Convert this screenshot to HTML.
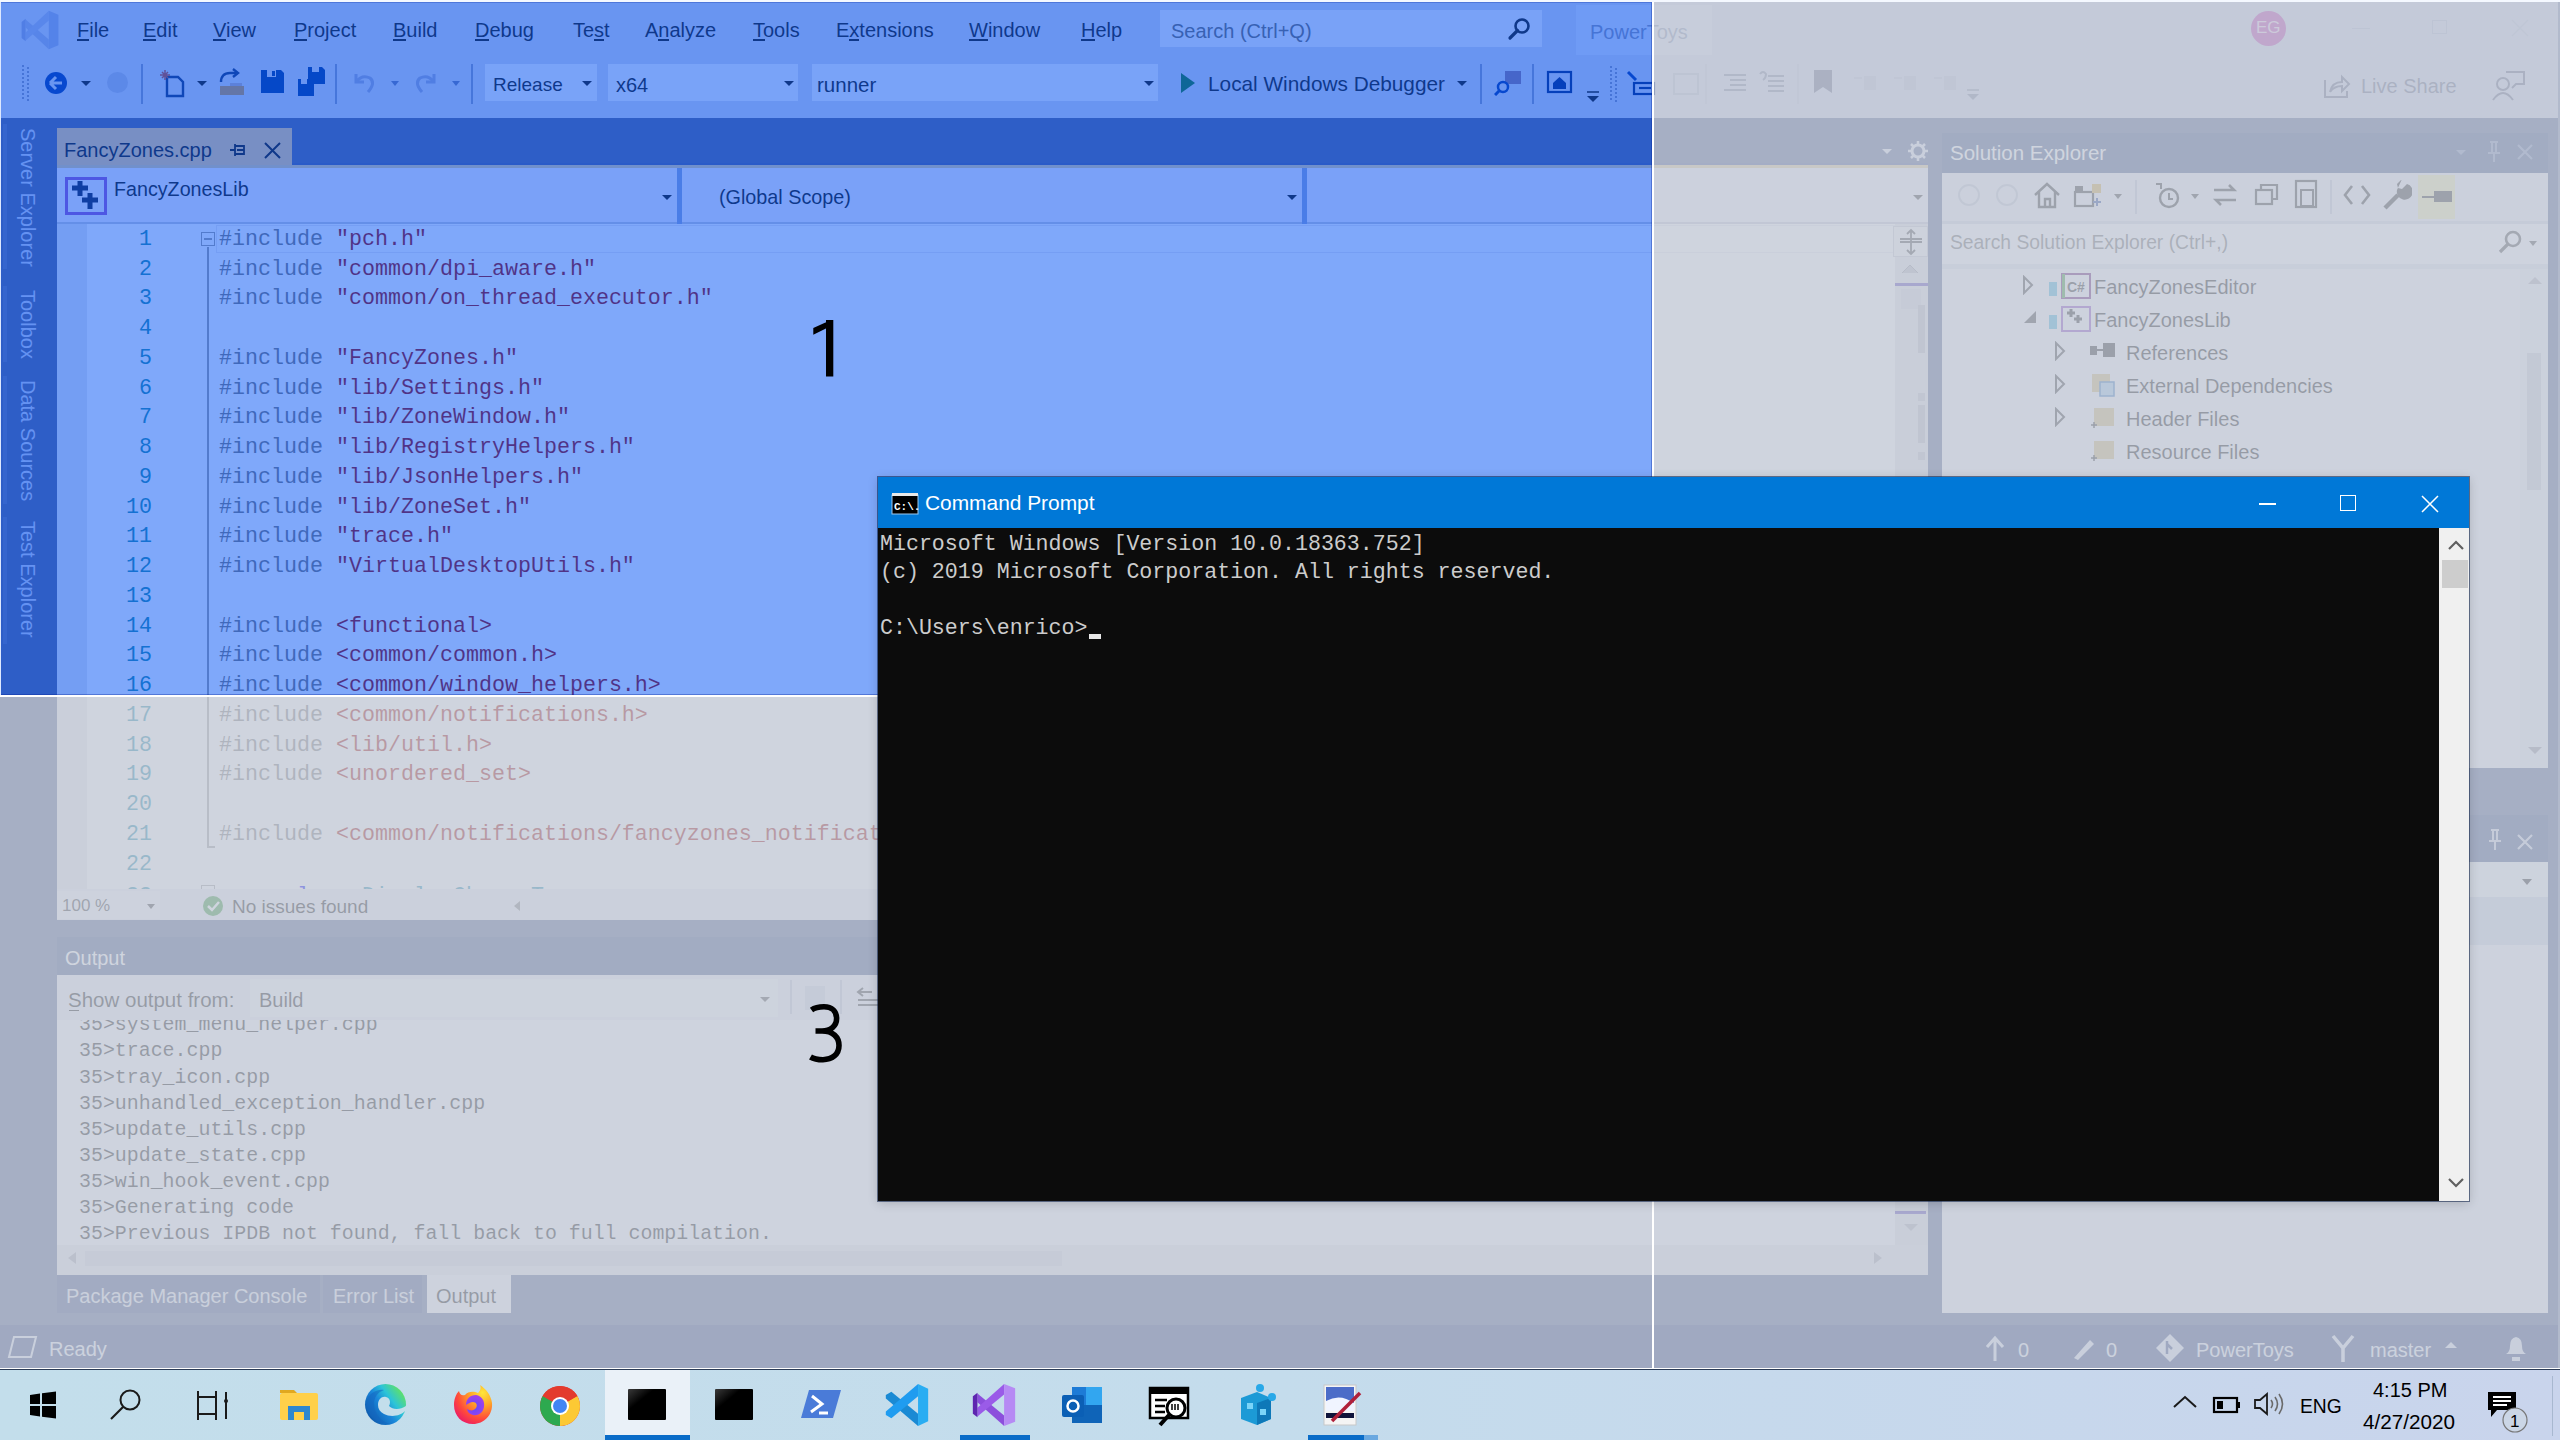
<!DOCTYPE html>
<html><head><meta charset="utf-8">
<style>
html,body{margin:0;padding:0}
body{width:2560px;height:1440px;overflow:hidden;position:relative;font-family:"Liberation Sans",sans-serif;background:#c3dbea}
.a{position:absolute}
.t{white-space:pre;line-height:1}
</style></head><body>

<div id="vs" class="a" style="left:0;top:0;width:2560px;height:1368px;background:#5D6B99;overflow:hidden">
<div class="a" style="left:0px;top:0px;width:2560px;height:118px;background:#D3D8EC;"></div>
<div class="a" style="left:0px;top:0px;width:2560px;height:2px;background:#E8ECF8;"></div>
<svg class="a" style="left:20px;top:10px;" width="40" height="40" viewBox="0 0 40 40"><g transform="scale(0.4,0.4)"><path d="M14 24 L72 74 L72 98 L14 44 Z" fill="#AEB8DC"/><path d="M14 76 L72 26 L72 2 L14 56 Z" fill="#B2BCE0"/><path d="M4 30 L14 22 L14 78 L4 70 Z" fill="#A0AAD4"/><path d="M72 2 L96 12 V88 L72 98 Z" fill="#A8B4DC"/></g></svg>
<div class="a t" style="left:77px;top:20px;font-size:20px;color:#1E1E1E;font-family:'Liberation Sans',sans-serif;">File</div>
<div class="a t" style="left:143px;top:20px;font-size:20px;color:#1E1E1E;font-family:'Liberation Sans',sans-serif;">Edit</div>
<div class="a t" style="left:213px;top:20px;font-size:20px;color:#1E1E1E;font-family:'Liberation Sans',sans-serif;">View</div>
<div class="a t" style="left:294px;top:20px;font-size:20px;color:#1E1E1E;font-family:'Liberation Sans',sans-serif;">Project</div>
<div class="a t" style="left:393px;top:20px;font-size:20px;color:#1E1E1E;font-family:'Liberation Sans',sans-serif;">Build</div>
<div class="a t" style="left:475px;top:20px;font-size:20px;color:#1E1E1E;font-family:'Liberation Sans',sans-serif;">Debug</div>
<div class="a t" style="left:573px;top:20px;font-size:20px;color:#1E1E1E;font-family:'Liberation Sans',sans-serif;">Test</div>
<div class="a t" style="left:645px;top:20px;font-size:20px;color:#1E1E1E;font-family:'Liberation Sans',sans-serif;">Analyze</div>
<div class="a t" style="left:753px;top:20px;font-size:20px;color:#1E1E1E;font-family:'Liberation Sans',sans-serif;">Tools</div>
<div class="a t" style="left:836px;top:20px;font-size:20px;color:#1E1E1E;font-family:'Liberation Sans',sans-serif;">Extensions</div>
<div class="a t" style="left:969px;top:20px;font-size:20px;color:#1E1E1E;font-family:'Liberation Sans',sans-serif;">Window</div>
<div class="a t" style="left:1081px;top:20px;font-size:20px;color:#1E1E1E;font-family:'Liberation Sans',sans-serif;">Help</div>
<div class="a" style="left:77px;top:39px;width:12px;height:1.5px;background:#1E1E1E;"></div>
<div class="a" style="left:143px;top:39px;width:13px;height:1.5px;background:#1E1E1E;"></div>
<div class="a" style="left:213px;top:39px;width:13px;height:1.5px;background:#1E1E1E;"></div>
<div class="a" style="left:294px;top:39px;width:13px;height:1.5px;background:#1E1E1E;"></div>
<div class="a" style="left:393px;top:39px;width:13px;height:1.5px;background:#1E1E1E;"></div>
<div class="a" style="left:475px;top:39px;width:14px;height:1.5px;background:#1E1E1E;"></div>
<div class="a" style="left:594px;top:39px;width:10px;height:1.5px;background:#1E1E1E;"></div>
<div class="a" style="left:658.3px;top:39px;width:11px;height:1.5px;background:#1E1E1E;"></div>
<div class="a" style="left:753px;top:39px;width:12px;height:1.5px;background:#1E1E1E;"></div>
<div class="a" style="left:849.3px;top:39px;width:10px;height:1.5px;background:#1E1E1E;"></div>
<div class="a" style="left:969px;top:39px;width:19px;height:1.5px;background:#1E1E1E;"></div>
<div class="a" style="left:1081px;top:39px;width:14px;height:1.5px;background:#1E1E1E;"></div>
<div class="a" style="left:1160px;top:10px;width:382px;height:37px;background:#F2F3F9;"></div>
<div class="a t" style="left:1171px;top:21px;font-size:20px;color:#717171;font-family:'Liberation Sans',sans-serif;">Search (Ctrl+Q)</div>
<svg class="a" style="left:1506px;top:16px;" width="26" height="26" viewBox="0 0 26 26"><circle cx="16" cy="10" r="6.5" fill="none" stroke="#1E1E1E" stroke-width="2.6"/><path d="M11.5 14.5 L4 22" stroke="#1E1E1E" stroke-width="3.2" stroke-linecap="round"/></svg>
<div class="a" style="left:1576px;top:5px;width:136px;height:50px;background:#DEE4F4;"></div>
<div class="a t" style="left:1590px;top:22px;font-size:20px;color:#8C96B4;font-family:'Liberation Sans',sans-serif;">PowerToys</div>
<div class="a" style="left:2251px;top:11px;width:35px;height:35px;border-radius:50%;background:#C24DB8"></div>
<div class="a t" style="left:2256px;top:19px;font-size:17px;color:#F4D8F0;font-family:'Liberation Sans',sans-serif;">EG</div>
<div class="a" style="left:2352px;top:28px;width:18px;height:1px;background:#B8C0D8;"></div>
<div class="a" style="left:2432px;top:20px;width:15px;height:14px;background:none;border:1.5px solid #B8C0D8;box-sizing:border-box"></div>
<svg class="a" style="left:2510px;top:18px;" width="20" height="20" viewBox="0 0 20 20"><path d="M2 2 L18 18 M18 2 L2 18" stroke="#C0C8DC" stroke-width="1.5"/></svg>
<div class="a" style="left:22px;top:65px;width:2px;height:2px;background:#8D97B8;"></div><div class="a" style="left:27px;top:67px;width:2px;height:2px;background:#8D97B8;"></div><div class="a" style="left:22px;top:69px;width:2px;height:2px;background:#8D97B8;"></div><div class="a" style="left:27px;top:71px;width:2px;height:2px;background:#8D97B8;"></div><div class="a" style="left:22px;top:73px;width:2px;height:2px;background:#8D97B8;"></div><div class="a" style="left:27px;top:75px;width:2px;height:2px;background:#8D97B8;"></div><div class="a" style="left:22px;top:77px;width:2px;height:2px;background:#8D97B8;"></div><div class="a" style="left:27px;top:79px;width:2px;height:2px;background:#8D97B8;"></div><div class="a" style="left:22px;top:81px;width:2px;height:2px;background:#8D97B8;"></div><div class="a" style="left:27px;top:83px;width:2px;height:2px;background:#8D97B8;"></div><div class="a" style="left:22px;top:85px;width:2px;height:2px;background:#8D97B8;"></div><div class="a" style="left:27px;top:87px;width:2px;height:2px;background:#8D97B8;"></div><div class="a" style="left:22px;top:89px;width:2px;height:2px;background:#8D97B8;"></div><div class="a" style="left:27px;top:91px;width:2px;height:2px;background:#8D97B8;"></div><div class="a" style="left:22px;top:93px;width:2px;height:2px;background:#8D97B8;"></div><div class="a" style="left:27px;top:95px;width:2px;height:2px;background:#8D97B8;"></div><div class="a" style="left:22px;top:97px;width:2px;height:2px;background:#8D97B8;"></div><div class="a" style="left:27px;top:99px;width:2px;height:2px;background:#8D97B8;"></div>
<svg class="a" style="left:44px;top:71px;" width="24" height="24" viewBox="0 0 24 24"><circle cx="12" cy="12" r="11" fill="#0E3FA8"/><path d="M6 12 L12 6 M6 12 L12 18 M6 12 H18" stroke="#D3D8EC" stroke-width="3"/></svg>
<div class="a" style="left:81.0px;top:80.5px;width:0;height:0;border-left:5.0px solid transparent;border-right:5.0px solid transparent;border-top:5px solid #1E1E1E"></div>
<div class="a" style="left:107px;top:72px;width:21px;height:21px;border-radius:50%;background:#B8C0DA"></div>
<div class="a" style="left:141px;top:64px;width:2px;height:40px;background:#8D9AC0;"></div>
<svg class="a" style="left:158px;top:68px;" width="28" height="30" viewBox="0 0 28 30"><path d="M9 9 h11 l5 5 v14 h-16 z" fill="none" stroke="#1E3C7A" stroke-width="2.4"/><path d="M4 4 l6 6 M10 4 l-6 6 M7 2 v10 M2 7 h10" stroke="#C0503A" stroke-width="1.5"/></svg>
<div class="a" style="left:197.0px;top:80.5px;width:0;height:0;border-left:5.0px solid transparent;border-right:5.0px solid transparent;border-top:5px solid #1E1E1E"></div>
<svg class="a" style="left:217px;top:66px;" width="30" height="32" viewBox="0 0 30 32"><path d="M4 16 q0 -9 9 -9 h6" fill="none" stroke="#1E3C7A" stroke-width="2.4"/><path d="M16 3 l5 4 l-5 4" fill="none" stroke="#1E3C7A" stroke-width="2.4"/><path d="M3 20 h24 v9 h-24 z" fill="#C89A58"/><path d="M13 17 h12 v3 h-12z" fill="#B8B0C0"/></svg>
<svg class="a" style="left:259px;top:67px;" width="26" height="28" viewBox="0 0 26 28"><path d="M2 3 h20 l3 3 v20 h-23 z" fill="#0B3E9A"/><path d="M8 3 h9 v7 h-9z" fill="#D3D8EC"/><path d="M13 4 h3 v5 h-3z" fill="#0B3E9A"/></svg>
<svg class="a" style="left:296px;top:66px;" width="30" height="32" viewBox="0 0 30 32"><path d="M12 1 h14 l3 3 v14 h-17 z" fill="#0B3E9A"/><path d="M16 1 h7 v5 h-7z" fill="#D3D8EC"/><path d="M2 13 h14 l2 2 v15 h-16 z" fill="#0B3E9A"/><path d="M5 13 h6 v5 h-6z" fill="#D3D8EC"/></svg>
<div class="a" style="left:335px;top:64px;width:2px;height:40px;background:#8D9AC0;"></div>
<svg class="a" style="left:350px;top:68px;" width="28" height="28" viewBox="0 0 28 28"><path d="M6 6 v8 h8" fill="none" stroke="#A0AAD0" stroke-width="3"/><path d="M6 14 q6 -8 14 -4 q6 5 -2 14" fill="none" stroke="#A0AAD0" stroke-width="3"/></svg>
<div class="a" style="left:390.5px;top:80.5px;width:0;height:0;border-left:4.5px solid transparent;border-right:4.5px solid transparent;border-top:5px solid #6F7FB0"></div>
<svg class="a" style="left:412px;top:68px;" width="28" height="28" viewBox="0 0 28 28"><path d="M22 6 v8 h-8" fill="none" stroke="#A0AAD0" stroke-width="3"/><path d="M22 14 q-6 -8 -14 -4 q-6 5 2 14" fill="none" stroke="#A0AAD0" stroke-width="3"/></svg>
<div class="a" style="left:451.5px;top:80.5px;width:0;height:0;border-left:4.5px solid transparent;border-right:4.5px solid transparent;border-top:5px solid #6F7FB0"></div>
<div class="a" style="left:471px;top:64px;width:2px;height:40px;background:#8D9AC0;"></div>
<div class="a" style="left:485px;top:64px;width:112px;height:37px;background:#F3F4FB;"></div>
<div class="a t" style="left:493px;top:75px;font-size:19px;color:#1E1E1E;font-family:'Liberation Sans',sans-serif;">Release</div>
<div class="a" style="left:582.0px;top:80.5px;width:0;height:0;border-left:5.0px solid transparent;border-right:5.0px solid transparent;border-top:5px solid #1E1E1E"></div>
<div class="a" style="left:608px;top:64px;width:190px;height:37px;background:#F3F4FB;"></div>
<div class="a t" style="left:616px;top:75px;font-size:20px;color:#1E1E1E;font-family:'Liberation Sans',sans-serif;">x64</div>
<div class="a" style="left:784.0px;top:80.5px;width:0;height:0;border-left:5.0px solid transparent;border-right:5.0px solid transparent;border-top:5px solid #1E1E1E"></div>
<div class="a" style="left:812px;top:64px;width:346px;height:37px;background:#F3F4FB;"></div>
<div class="a t" style="left:817px;top:75px;font-size:20.5px;color:#1E1E1E;font-family:'Liberation Sans',sans-serif;">runner</div>
<div class="a" style="left:1144.0px;top:80.5px;width:0;height:0;border-left:5.0px solid transparent;border-right:5.0px solid transparent;border-top:5px solid #1E1E1E"></div>
<svg class="a" style="left:1178px;top:71px;" width="20" height="24" viewBox="0 0 20 24"><path d="M3 2 L17 12 L3 22 Z" fill="#1C7A3A"/></svg>
<div class="a t" style="left:1208px;top:74px;font-size:20.8px;color:#1E1E1E;font-family:'Liberation Sans',sans-serif;">Local Windows Debugger</div>
<div class="a" style="left:1457.0px;top:80.5px;width:0;height:0;border-left:5.0px solid transparent;border-right:5.0px solid transparent;border-top:5px solid #1E1E1E"></div>
<div class="a" style="left:1480px;top:64px;width:2px;height:40px;background:#8D9AC0;"></div>
<svg class="a" style="left:1494px;top:68px;" width="30" height="28" viewBox="0 0 30 28"><rect x="11" y="3" width="16" height="13" fill="#8C7A9E"/><circle cx="9" cy="19" r="5" fill="none" stroke="#0E3FA8" stroke-width="2.5"/><path d="M5 23 l-4 4" stroke="#0E3FA8" stroke-width="3"/></svg>
<div class="a" style="left:1532px;top:64px;width:2px;height:40px;background:#8D9AC0;"></div>
<svg class="a" style="left:1546px;top:70px;" width="28" height="24" viewBox="0 0 28 24"><rect x="2" y="2" width="23" height="20" fill="none" stroke="#0B2E80" stroke-width="2.2"/><path d="M7 13 l6.5 -6 l6.5 6 v6 h-13z" fill="#0B2E80"/></svg>
<svg class="a" style="left:1585px;top:90px;" width="16" height="14" viewBox="0 0 16 14"><path d="M2 2 h12" stroke="#1E1E1E" stroke-width="1.5"/><path d="M2 6 h12 l-6 6z" fill="#1E1E1E"/></svg>
<div class="a" style="left:1610px;top:66px;width:2px;height:2px;background:#8D97B8;"></div><div class="a" style="left:1615px;top:68px;width:2px;height:2px;background:#8D97B8;"></div><div class="a" style="left:1610px;top:70px;width:2px;height:2px;background:#8D97B8;"></div><div class="a" style="left:1615px;top:72px;width:2px;height:2px;background:#8D97B8;"></div><div class="a" style="left:1610px;top:74px;width:2px;height:2px;background:#8D97B8;"></div><div class="a" style="left:1615px;top:76px;width:2px;height:2px;background:#8D97B8;"></div><div class="a" style="left:1610px;top:78px;width:2px;height:2px;background:#8D97B8;"></div><div class="a" style="left:1615px;top:80px;width:2px;height:2px;background:#8D97B8;"></div><div class="a" style="left:1610px;top:82px;width:2px;height:2px;background:#8D97B8;"></div><div class="a" style="left:1615px;top:84px;width:2px;height:2px;background:#8D97B8;"></div><div class="a" style="left:1610px;top:86px;width:2px;height:2px;background:#8D97B8;"></div><div class="a" style="left:1615px;top:88px;width:2px;height:2px;background:#8D97B8;"></div><div class="a" style="left:1610px;top:90px;width:2px;height:2px;background:#8D97B8;"></div><div class="a" style="left:1615px;top:92px;width:2px;height:2px;background:#8D97B8;"></div><div class="a" style="left:1610px;top:94px;width:2px;height:2px;background:#8D97B8;"></div><div class="a" style="left:1615px;top:96px;width:2px;height:2px;background:#8D97B8;"></div><div class="a" style="left:1610px;top:98px;width:2px;height:2px;background:#8D97B8;"></div><div class="a" style="left:1615px;top:100px;width:2px;height:2px;background:#8D97B8;"></div>
<svg class="a" style="left:1626px;top:70px;" width="30" height="28" viewBox="0 0 30 28"><path d="M2 2 l8 8" stroke="#0E3FA8" stroke-width="3"/><rect x="8" y="13" width="20" height="11" fill="none" stroke="#0B2E80" stroke-width="2.2"/><path d="M13 18 h12" stroke="#0B2E80" stroke-width="2.2"/></svg>
<svg class="a" style="left:1668px;top:68px;" width="34" height="30" viewBox="0 0 34 30"><rect x="6" y="6" width="24" height="20" fill="none" stroke="#B8BED4" stroke-width="2"/></svg>
<div class="a" style="left:1705px;top:64px;width:2px;height:40px;background:#C5CBE0;"></div>
<svg class="a" style="left:1722px;top:72px;" width="26" height="22" viewBox="0 0 26 22"><path d="M2 3 h22 M8 8 h16 M8 13 h16 M2 18 h22" stroke="#8890A8" stroke-width="2"/></svg>
<svg class="a" style="left:1758px;top:70px;" width="28" height="26" viewBox="0 0 28 26"><path d="M2 4 q3 -4 6 0 q0 4 -3 6" fill="none" stroke="#8890A8" stroke-width="2"/><path d="M10 6 h16 M10 11 h16 M10 16 h16 M10 21 h16" stroke="#8890A8" stroke-width="2"/></svg>
<div class="a" style="left:1797px;top:64px;width:2px;height:40px;background:#C5CBE0;"></div>
<svg class="a" style="left:1810px;top:68px;" width="28" height="28" viewBox="0 0 28 28"><path d="M4 2 h18 v23 l-9 -6 l-9 6z" fill="#6F7690"/></svg>
<svg class="a" style="left:1852px;top:70px;" width="28" height="26" viewBox="0 0 28 26"><rect x="12" y="6" width="12" height="14" fill="#C2C8DC"/><path d="M2 8 h8" stroke="#C2C8DC" stroke-width="2"/></svg>
<svg class="a" style="left:1892px;top:70px;" width="28" height="26" viewBox="0 0 28 26"><rect x="12" y="6" width="12" height="14" fill="#C2C8DC"/><path d="M2 8 h8" stroke="#C2C8DC" stroke-width="2"/></svg>
<svg class="a" style="left:1932px;top:70px;" width="28" height="26" viewBox="0 0 28 26"><rect x="12" y="6" width="12" height="14" fill="#C2C8DC"/><path d="M2 8 h8" stroke="#C2C8DC" stroke-width="2"/></svg>
<svg class="a" style="left:1965px;top:88px;" width="16" height="14" viewBox="0 0 16 14"><path d="M2 2 h12" stroke="#8890A8" stroke-width="1.5"/><path d="M2 6 h12 l-6 6z" fill="#8890A8"/></svg>
<svg class="a" style="left:2322px;top:70px;" width="30" height="30" viewBox="0 0 30 30"><path d="M3 10 v17 h22 v-6" fill="none" stroke="#6F7690" stroke-width="2"/><path d="M8 22 q2 -10 12 -10 v-5 l7 7 l-7 7 v-5 q-8 0 -12 6" fill="none" stroke="#6F7690" stroke-width="2"/></svg>
<div class="a t" style="left:2361px;top:76px;font-size:20px;color:#6F7690;font-family:'Liberation Sans',sans-serif;">Live Share</div>
<svg class="a" style="left:2490px;top:66px;" width="40" height="38" viewBox="0 0 40 38"><circle cx="13" cy="18" r="6" fill="none" stroke="#6F7690" stroke-width="2"/><path d="M3 34 q10 -14 20 0" fill="none" stroke="#6F7690" stroke-width="2"/><path d="M16 6 h18 v12 h-8 l-4 4" fill="none" stroke="#6F7690" stroke-width="2"/></svg>
<div class="a" style="left:57px;top:128px;width:235px;height:38px;background:#F0CC92;"></div>
<div class="a t" style="left:64px;top:140px;font-size:20px;color:#1E1E1E;font-family:'Liberation Sans',sans-serif;">FancyZones.cpp</div>
<svg class="a" style="left:228px;top:141px;" width="20" height="18" viewBox="0 0 20 18"><path d="M2 9 h5 M7 3 v12 M7 5 h9 v8 h-9 M9 9 h7" fill="none" stroke="#1E1E1E" stroke-width="1.8"/></svg>
<svg class="a" style="left:263px;top:141px;" width="19" height="19" viewBox="0 0 19 19"><path d="M2 2 L17 17 M17 2 L2 17" stroke="#1E1E1E" stroke-width="2"/></svg>
<div class="a" style="left:292px;top:163px;width:1636px;height:2px;background:#54659A;"></div>
<div class="a" style="left:57px;top:165px;width:1871px;height:3px;background:#E2CEA0;"></div>
<div class="a" style="left:1882.0px;top:148.5px;width:0;height:0;border-left:5.0px solid transparent;border-right:5.0px solid transparent;border-top:5px solid #E8ECF8"></div>
<svg class="a" style="left:1906px;top:139px;" width="24" height="24" viewBox="0 0 24 24"><circle cx="12" cy="12" r="6" fill="none" stroke="#E8ECF8" stroke-width="3"/><path d="M12 2 v4 M12 18 v4 M2 12 h4 M18 12 h4 M5 5 l3 3 M16 16 l3 3 M5 19 l3 -3 M16 8 l3 -3" stroke="#E8ECF8" stroke-width="2.5"/></svg>
<div class="a t" style="left:38px;top:128px;font-size:20px;color:#C9D2EE;transform-origin:0 0;transform:rotate(90deg)">Server Explorer</div>
<div class="a" style="left:3px;top:124px;width:4px;height:145px;background:#6A78A6;"></div>
<div class="a t" style="left:38px;top:290px;font-size:20px;color:#C9D2EE;transform-origin:0 0;transform:rotate(90deg)">Toolbox</div>
<div class="a" style="left:3px;top:286px;width:4px;height:76px;background:#6A78A6;"></div>
<div class="a t" style="left:38px;top:380px;font-size:20px;color:#C9D2EE;transform-origin:0 0;transform:rotate(90deg)">Data Sources</div>
<div class="a" style="left:3px;top:376px;width:4px;height:128px;background:#6A78A6;"></div>
<div class="a t" style="left:38px;top:521px;font-size:20px;color:#C9D2EE;transform-origin:0 0;transform:rotate(90deg)">Test Explorer</div>
<div class="a" style="left:3px;top:517px;width:4px;height:127px;background:#6A78A6;"></div>
<div class="a" style="left:57px;top:168px;width:1871px;height:56px;background:#F4F1FB;"></div>
<div class="a" style="left:57px;top:222px;width:1871px;height:2px;background:#C9CCDA;"></div>
<div class="a" style="left:677px;top:168px;width:5px;height:56px;background:#94A8D8;"></div>
<div class="a" style="left:1302px;top:168px;width:5px;height:56px;background:#94A8D8;"></div>
<svg class="a" style="left:63px;top:175px;" width="46" height="42" viewBox="0 0 46 42"><rect x="3.5" y="3.5" width="39" height="35" fill="none" stroke="#9A5CD0" stroke-width="3"/><path d="M9 13 h16 M17 6 v15 M19 25 h16 M27 18 v16" stroke="#1E2A50" stroke-width="5"/></svg>
<div class="a t" style="left:114px;top:180px;font-size:19.7px;color:#1E1E1E;font-family:'Liberation Sans',sans-serif;">FancyZonesLib</div>
<div class="a" style="left:662.0px;top:194.5px;width:0;height:0;border-left:5.0px solid transparent;border-right:5.0px solid transparent;border-top:5px solid #1E1E1E"></div>
<div class="a t" style="left:719px;top:188px;font-size:19.8px;color:#1E1E1E;font-family:'Liberation Sans',sans-serif;">(Global Scope)</div>
<div class="a" style="left:1287.0px;top:194.5px;width:0;height:0;border-left:5.0px solid transparent;border-right:5.0px solid transparent;border-top:5px solid #1E1E1E"></div>
<div class="a" style="left:1913.0px;top:194.5px;width:0;height:0;border-left:5.0px solid transparent;border-right:5.0px solid transparent;border-top:5px solid #444"></div>
<div class="a" style="left:57px;top:224px;width:1838px;height:666px;background:#FFFFFF;"></div>
<div class="a" style="left:57px;top:224px;width:30px;height:666px;background:#E9EAF0;"></div>
<div class="a" style="left:57px;top:224px;width:1838px;height:666px;overflow:hidden">
<div class="a t" style="left:82.0px;top:4.7px;font-size:21.66px;color:#2B91AF;font-family:'Liberation Mono',monospace">1</div>
<div class="a t" style="left:162px;top:4.7px;font-size:21.66px;font-family:'Liberation Mono',monospace"><span style="color:#808080">#include</span><span style="color:#A31515"> &quot;pch.h&quot;</span></div>
<div class="a t" style="left:82.0px;top:34.5px;font-size:21.66px;color:#2B91AF;font-family:'Liberation Mono',monospace">2</div>
<div class="a t" style="left:162px;top:34.5px;font-size:21.66px;font-family:'Liberation Mono',monospace"><span style="color:#808080">#include</span><span style="color:#A31515"> &quot;common/dpi_aware.h&quot;</span></div>
<div class="a t" style="left:82.0px;top:64.2px;font-size:21.66px;color:#2B91AF;font-family:'Liberation Mono',monospace">3</div>
<div class="a t" style="left:162px;top:64.2px;font-size:21.66px;font-family:'Liberation Mono',monospace"><span style="color:#808080">#include</span><span style="color:#A31515"> &quot;common/on_thread_executor.h&quot;</span></div>
<div class="a t" style="left:82.0px;top:94.0px;font-size:21.66px;color:#2B91AF;font-family:'Liberation Mono',monospace">4</div>
<div class="a t" style="left:82.0px;top:123.7px;font-size:21.66px;color:#2B91AF;font-family:'Liberation Mono',monospace">5</div>
<div class="a t" style="left:162px;top:123.7px;font-size:21.66px;font-family:'Liberation Mono',monospace"><span style="color:#808080">#include</span><span style="color:#A31515"> &quot;FancyZones.h&quot;</span></div>
<div class="a t" style="left:82.0px;top:153.5px;font-size:21.66px;color:#2B91AF;font-family:'Liberation Mono',monospace">6</div>
<div class="a t" style="left:162px;top:153.5px;font-size:21.66px;font-family:'Liberation Mono',monospace"><span style="color:#808080">#include</span><span style="color:#A31515"> &quot;lib/Settings.h&quot;</span></div>
<div class="a t" style="left:82.0px;top:183.3px;font-size:21.66px;color:#2B91AF;font-family:'Liberation Mono',monospace">7</div>
<div class="a t" style="left:162px;top:183.3px;font-size:21.66px;font-family:'Liberation Mono',monospace"><span style="color:#808080">#include</span><span style="color:#A31515"> &quot;lib/ZoneWindow.h&quot;</span></div>
<div class="a t" style="left:82.0px;top:213.0px;font-size:21.66px;color:#2B91AF;font-family:'Liberation Mono',monospace">8</div>
<div class="a t" style="left:162px;top:213.0px;font-size:21.66px;font-family:'Liberation Mono',monospace"><span style="color:#808080">#include</span><span style="color:#A31515"> &quot;lib/RegistryHelpers.h&quot;</span></div>
<div class="a t" style="left:82.0px;top:242.8px;font-size:21.66px;color:#2B91AF;font-family:'Liberation Mono',monospace">9</div>
<div class="a t" style="left:162px;top:242.8px;font-size:21.66px;font-family:'Liberation Mono',monospace"><span style="color:#808080">#include</span><span style="color:#A31515"> &quot;lib/JsonHelpers.h&quot;</span></div>
<div class="a t" style="left:69.0px;top:272.5px;font-size:21.66px;color:#2B91AF;font-family:'Liberation Mono',monospace">10</div>
<div class="a t" style="left:162px;top:272.5px;font-size:21.66px;font-family:'Liberation Mono',monospace"><span style="color:#808080">#include</span><span style="color:#A31515"> &quot;lib/ZoneSet.h&quot;</span></div>
<div class="a t" style="left:69.0px;top:302.3px;font-size:21.66px;color:#2B91AF;font-family:'Liberation Mono',monospace">11</div>
<div class="a t" style="left:162px;top:302.3px;font-size:21.66px;font-family:'Liberation Mono',monospace"><span style="color:#808080">#include</span><span style="color:#A31515"> &quot;trace.h&quot;</span></div>
<div class="a t" style="left:69.0px;top:332.1px;font-size:21.66px;color:#2B91AF;font-family:'Liberation Mono',monospace">12</div>
<div class="a t" style="left:162px;top:332.1px;font-size:21.66px;font-family:'Liberation Mono',monospace"><span style="color:#808080">#include</span><span style="color:#A31515"> &quot;VirtualDesktopUtils.h&quot;</span></div>
<div class="a t" style="left:69.0px;top:361.8px;font-size:21.66px;color:#2B91AF;font-family:'Liberation Mono',monospace">13</div>
<div class="a t" style="left:69.0px;top:391.6px;font-size:21.66px;color:#2B91AF;font-family:'Liberation Mono',monospace">14</div>
<div class="a t" style="left:162px;top:391.6px;font-size:21.66px;font-family:'Liberation Mono',monospace"><span style="color:#808080">#include</span><span style="color:#A31515"> &lt;functional&gt;</span></div>
<div class="a t" style="left:69.0px;top:421.3px;font-size:21.66px;color:#2B91AF;font-family:'Liberation Mono',monospace">15</div>
<div class="a t" style="left:162px;top:421.3px;font-size:21.66px;font-family:'Liberation Mono',monospace"><span style="color:#808080">#include</span><span style="color:#A31515"> &lt;common/common.h&gt;</span></div>
<div class="a t" style="left:69.0px;top:451.1px;font-size:21.66px;color:#2B91AF;font-family:'Liberation Mono',monospace">16</div>
<div class="a t" style="left:162px;top:451.1px;font-size:21.66px;font-family:'Liberation Mono',monospace"><span style="color:#808080">#include</span><span style="color:#A31515"> &lt;common/window_helpers.h&gt;</span></div>
<div class="a t" style="left:69.0px;top:480.9px;font-size:21.66px;color:#2B91AF;font-family:'Liberation Mono',monospace">17</div>
<div class="a t" style="left:162px;top:480.9px;font-size:21.66px;font-family:'Liberation Mono',monospace"><span style="color:#808080">#include</span><span style="color:#A31515"> &lt;common/notifications.h&gt;</span></div>
<div class="a t" style="left:69.0px;top:510.6px;font-size:21.66px;color:#2B91AF;font-family:'Liberation Mono',monospace">18</div>
<div class="a t" style="left:162px;top:510.6px;font-size:21.66px;font-family:'Liberation Mono',monospace"><span style="color:#808080">#include</span><span style="color:#A31515"> &lt;lib/util.h&gt;</span></div>
<div class="a t" style="left:69.0px;top:540.4px;font-size:21.66px;color:#2B91AF;font-family:'Liberation Mono',monospace">19</div>
<div class="a t" style="left:162px;top:540.4px;font-size:21.66px;font-family:'Liberation Mono',monospace"><span style="color:#808080">#include</span><span style="color:#A31515"> &lt;unordered_set&gt;</span></div>
<div class="a t" style="left:69.0px;top:570.1px;font-size:21.66px;color:#2B91AF;font-family:'Liberation Mono',monospace">20</div>
<div class="a t" style="left:69.0px;top:599.9px;font-size:21.66px;color:#2B91AF;font-family:'Liberation Mono',monospace">21</div>
<div class="a t" style="left:162px;top:599.9px;font-size:21.66px;font-family:'Liberation Mono',monospace"><span style="color:#808080">#include</span><span style="color:#A31515"> &lt;common/notifications/fancyzones_notifications.h&gt;</span></div>
<div class="a t" style="left:69.0px;top:629.7px;font-size:21.66px;color:#2B91AF;font-family:'Liberation Mono',monospace">22</div>
<div class="a t" style="left:69.0px;top:662.4px;font-size:21.66px;color:#2B91AF;font-family:'Liberation Mono',monospace">23</div>
<div class="a t" style="left:162px;top:662.4px;font-size:21.66px;font-family:'Liberation Mono',monospace"><span style="color:#0000FF">enum class</span> <span style="color:#2B91AF">DisplayChangeType</span></div>
</div>
<div class="a" style="left:201px;top:232px;width:14px;height:14px;background:none;border:1px solid #A5A5A5;box-sizing:border-box"></div>
<div class="a" style="left:204px;top:238px;width:8px;height:1.5px;background:#A5A5A5;"></div>
<div class="a" style="left:207px;top:247px;width:1.5px;height:600px;background:#A5A5A5;"></div>
<div class="a" style="left:207px;top:846px;width:8px;height:1.5px;background:#A5A5A5;"></div>
<div class="a" style="left:201px;top:885px;width:14px;height:14px;background:none;border:1px solid #A5A5A5;box-sizing:border-box"></div>
<div class="a" style="left:216px;top:225px;width:1679px;height:28px;background:none;border:1px solid #EAEAF2;box-sizing:border-box"></div>
<div class="a" style="left:1895px;top:224px;width:33px;height:666px;background:#E8E8EC;"></div>
<div class="a" style="left:1893px;top:226px;width:35px;height:31px;background:#F5F5F5;border:1px solid #D0D0D8;box-sizing:border-box"></div>
<svg class="a" style="left:1898px;top:228px;" width="26" height="28" viewBox="0 0 26 28"><path d="M2 14 h22 M2 11 h22 M13 2 v24 M9 6 l4 -4 l4 4 M9 22 l4 4 l4 -4" fill="none" stroke="#555" stroke-width="1.8"/></svg>
<svg class="a" style="left:1900px;top:262px;" width="20" height="14" viewBox="0 0 20 14"><path d="M2 11 L10 3 L18 11" fill="#C0C0C8" stroke="#A0A0A8" stroke-width="1"/></svg>
<div class="a" style="left:1895px;top:283px;width:33px;height:3px;background:#6650C0;"></div>
<div class="a" style="left:1901px;top:289px;width:20px;height:20px;background:#DADAE2;"></div>
<div class="a" style="left:1918px;top:305px;width:7px;height:48px;background:#C2C3CC;"></div>
<div class="a" style="left:1918px;top:393px;width:7px;height:8px;background:#C8C8D0;"></div>
<div class="a" style="left:1918px;top:405px;width:7px;height:38px;background:#C2C3CC;"></div>
<div class="a" style="left:1918px;top:452px;width:7px;height:8px;background:#C8C8D0;"></div>
<div class="a" style="left:57px;top:889px;width:1871px;height:31px;background:#F0F0F5;"></div>
<div class="a" style="left:57px;top:891px;width:103px;height:28px;background:#F8F8FC;"></div>
<div class="a t" style="left:62px;top:897px;font-size:17px;color:#444;font-family:'Liberation Sans',sans-serif;">100 %</div>
<div class="a" style="left:146.5px;top:903.5px;width:0;height:0;border-left:4.5px solid transparent;border-right:4.5px solid transparent;border-top:5px solid #444"></div>
<div class="a" style="left:203px;top:896px;width:20px;height:20px;border-radius:50%;background:#3C9A40"></div>
<svg class="a" style="left:203px;top:896px;" width="20" height="20" viewBox="0 0 20 20"><path d="M5 10 l4 4 l7 -8" fill="none" stroke="#fff" stroke-width="2.5"/></svg>
<div class="a t" style="left:232px;top:897px;font-size:19px;color:#1E1E1E;font-family:'Liberation Sans',sans-serif;">No issues found</div>
<svg class="a" style="left:512px;top:899px;" width="10" height="14" viewBox="0 0 10 14"><path d="M8 2 L2 7 L8 12" fill="#888"/></svg>
<div class="a" style="left:57px;top:937px;width:1871px;height:38px;background:#4B618F;"></div>
<div class="a t" style="left:65px;top:948px;font-size:20px;color:#FFFFFF;font-family:'Liberation Sans',sans-serif;">Output</div>
<div class="a" style="left:57px;top:975px;width:1871px;height:45px;background:#EEF0F7;"></div>
<div class="a t" style="left:68px;top:990px;font-size:20.5px;color:#1E1E1E;font-family:'Liberation Sans',sans-serif;">Show output from:</div>
<div class="a" style="left:69px;top:1010px;width:10px;height:1px;background:#1E1E1E;"></div>
<div class="a" style="left:250px;top:979px;width:528px;height:38px;background:#F8F9FC;"></div>
<div class="a t" style="left:259px;top:990px;font-size:20px;color:#1E1E1E;font-family:'Liberation Sans',sans-serif;">Build</div>
<div class="a" style="left:760.0px;top:996.5px;width:0;height:0;border-left:5.0px solid transparent;border-right:5.0px solid transparent;border-top:5px solid #555"></div>
<div class="a" style="left:790px;top:980px;width:1.5px;height:34px;background:#C8CCDA;"></div>
<div class="a" style="left:805px;top:986px;width:20px;height:24px;background:#D8DCE8;"></div>
<div class="a" style="left:840px;top:980px;width:1.5px;height:34px;background:#C8CCDA;"></div>
<svg class="a" style="left:855px;top:984px;" width="28" height="28" viewBox="0 0 28 28"><path d="M8 4 l-5 4 l5 4 M3 8 h14 M3 16 h22 M3 21 h22" fill="none" stroke="#444" stroke-width="2"/></svg>
<div class="a" style="left:57px;top:1020px;width:1871px;height:225px;background:#FAFBFF;"></div>
<div class="a" style="left:57px;top:1020px;width:1871px;height:225px;overflow:hidden">
<div class="a t" style="left:22px;top:-4.7px;font-size:19.92px;color:#1E1E1E;font-family:'Liberation Mono',monospace">35&gt;system_menu_helper.cpp</div>
<div class="a t" style="left:22px;top:21.4px;font-size:19.92px;color:#1E1E1E;font-family:'Liberation Mono',monospace">35&gt;trace.cpp</div>
<div class="a t" style="left:22px;top:47.5px;font-size:19.92px;color:#1E1E1E;font-family:'Liberation Mono',monospace">35&gt;tray_icon.cpp</div>
<div class="a t" style="left:22px;top:73.6px;font-size:19.92px;color:#1E1E1E;font-family:'Liberation Mono',monospace">35&gt;unhandled_exception_handler.cpp</div>
<div class="a t" style="left:22px;top:99.7px;font-size:19.92px;color:#1E1E1E;font-family:'Liberation Mono',monospace">35&gt;update_utils.cpp</div>
<div class="a t" style="left:22px;top:125.8px;font-size:19.92px;color:#1E1E1E;font-family:'Liberation Mono',monospace">35&gt;update_state.cpp</div>
<div class="a t" style="left:22px;top:151.9px;font-size:19.92px;color:#1E1E1E;font-family:'Liberation Mono',monospace">35&gt;win_hook_event.cpp</div>
<div class="a t" style="left:22px;top:178.0px;font-size:19.92px;color:#1E1E1E;font-family:'Liberation Mono',monospace">35&gt;Generating code</div>
<div class="a t" style="left:22px;top:204.1px;font-size:19.92px;color:#1E1E1E;font-family:'Liberation Mono',monospace">35&gt;Previous IPDB not found, fall back to full compilation.</div>
</div>
<div class="a" style="left:1895px;top:1020px;width:33px;height:225px;background:#E8E8EC;"></div>
<div class="a" style="left:1895px;top:1211px;width:31px;height:3px;background:#6650C0;"></div>
<svg class="a" style="left:1902px;top:1222px;" width="18" height="12" viewBox="0 0 18 12"><path d="M2 2 L9 9 L16 2" fill="#B8B8C0"/></svg>
<div class="a" style="left:57px;top:1245px;width:1871px;height:30px;background:#ECECF0;"></div>
<svg class="a" style="left:66px;top:1250px;" width="12" height="16" viewBox="0 0 12 16"><path d="M10 2 L2 8 L10 14 z" fill="#B0B0B8"/></svg>
<div class="a" style="left:85px;top:1251px;width:977px;height:15px;background:#DADCE4;"></div>
<svg class="a" style="left:1872px;top:1250px;" width="12" height="16" viewBox="0 0 12 16"><path d="M2 2 L10 8 L2 14 z" fill="#B0B0B8"/></svg>
<div class="a" style="left:57px;top:1275px;width:263px;height:38px;background:#4E5E8E;"></div>
<div class="a t" style="left:66px;top:1286px;font-size:20px;color:#E6EAF4;font-family:'Liberation Sans',sans-serif;">Package Manager Console</div>
<div class="a" style="left:323px;top:1275px;width:99px;height:38px;background:#4E5E8E;"></div>
<div class="a t" style="left:333px;top:1286px;font-size:20px;color:#E6EAF4;font-family:'Liberation Sans',sans-serif;">Error List</div>
<div class="a" style="left:427px;top:1275px;width:84px;height:38px;background:#F6F7FB;"></div>
<div class="a t" style="left:436px;top:1286px;font-size:20px;color:#1E1E1E;font-family:'Liberation Sans',sans-serif;">Output</div>
<div class="a" style="left:1942px;top:133px;width:606px;height:1180px;background:#F6F7FB;"></div>
<div class="a" style="left:1942px;top:133px;width:606px;height:40px;background:#4B618F;"></div>
<div class="a t" style="left:1950px;top:143px;font-size:20.5px;color:#FFFFFF;font-family:'Liberation Sans',sans-serif;">Solution Explorer</div>
<div class="a" style="left:2456.0px;top:149.5px;width:0;height:0;border-left:5.0px solid transparent;border-right:5.0px solid transparent;border-top:5px solid #8898C0"></div>
<svg class="a" style="left:2484px;top:140px;" width="20" height="24" viewBox="0 0 20 24"><path d="M6 2 h8 M8 2 v11 M12 2 v11 M4 13 h12 M10 13 v9" stroke="#8898C0" stroke-width="2"/></svg>
<svg class="a" style="left:2515px;top:142px;" width="20" height="20" viewBox="0 0 20 20"><path d="M3 3 L17 17 M17 3 L3 17" stroke="#8898C0" stroke-width="2.2"/></svg>
<div class="a" style="left:1942px;top:173px;width:606px;height:48px;background:#EEF0F7;"></div>
<div class="a" style="left:1958px;top:184px;width:22px;height:22px;border-radius:50%;border:2.5px solid #C8CCD8;box-sizing:border-box"></div>
<div class="a" style="left:1996px;top:184px;width:22px;height:22px;border-radius:50%;border:2.5px solid #C8CCD8;box-sizing:border-box"></div>
<svg class="a" style="left:2032px;top:180px;" width="30" height="30" viewBox="0 0 30 30"><path d="M3 15 L15 4 L27 15 M7 12 v15 h16 v-15 M13 27 v-8 h5 v8" fill="none" stroke="#3A3A3A" stroke-width="2.4"/></svg>
<svg class="a" style="left:2072px;top:180px;" width="34" height="30" viewBox="0 0 34 30"><rect x="3" y="12" width="18" height="14" fill="none" stroke="#3A3A3A" stroke-width="2.2"/><rect x="3" y="6" width="8" height="5" fill="#3A3A3A"/><rect x="20" y="4" width="9" height="9" fill="#D8B050"/><path d="M25 18 v8 M21 22 h8" stroke="#3050A0" stroke-width="2"/></svg>
<div class="a" style="left:2113.5px;top:193.5px;width:0;height:0;border-left:4.5px solid transparent;border-right:4.5px solid transparent;border-top:5px solid #444"></div>
<div class="a" style="left:2135px;top:180px;width:1.5px;height:34px;background:#C8CCDA;"></div>
<svg class="a" style="left:2152px;top:180px;" width="32" height="32" viewBox="0 0 32 32"><circle cx="17" cy="18" r="9" fill="none" stroke="#3A3A3A" stroke-width="2.4"/><path d="M17 13 v6 h4 M4 4 h5 v5" fill="none" stroke="#3A3A3A" stroke-width="2"/></svg>
<div class="a" style="left:2190.5px;top:193.5px;width:0;height:0;border-left:4.5px solid transparent;border-right:4.5px solid transparent;border-top:5px solid #444"></div>
<svg class="a" style="left:2210px;top:180px;" width="30" height="30" viewBox="0 0 30 30"><path d="M4 10 h20 l-5 -5 M26 20 h-20 l5 5" fill="none" stroke="#3A3A3A" stroke-width="2.6"/></svg>
<svg class="a" style="left:2252px;top:180px;" width="30" height="30" viewBox="0 0 30 30"><rect x="4" y="10" width="16" height="14" fill="none" stroke="#3A3A3A" stroke-width="2.2"/><path d="M9 10 v-5 h16 v14 h-5" fill="none" stroke="#3A3A3A" stroke-width="2.2"/></svg>
<svg class="a" style="left:2290px;top:178px;" width="32" height="34" viewBox="0 0 32 34"><rect x="6" y="3" width="20" height="26" fill="none" stroke="#3A3A3A" stroke-width="2.2"/><rect x="11" y="12" width="12" height="16" fill="none" stroke="#3A3A3A" stroke-width="2"/></svg>
<div class="a" style="left:2330px;top:180px;width:1.5px;height:34px;background:#C8CCDA;"></div>
<svg class="a" style="left:2342px;top:182px;" width="30" height="26" viewBox="0 0 30 26"><path d="M10 4 L3 13 L10 22 M20 4 L27 13 L20 22" fill="none" stroke="#3A3A3A" stroke-width="2.6"/></svg>
<svg class="a" style="left:2380px;top:180px;" width="32" height="32" viewBox="0 0 32 32"><path d="M5 28 L18 15" stroke="#3A3A3A" stroke-width="4.5"/><path d="M17 10 a8 8 0 1 0 10 -6 l-5 5 l-4 -1 l-1 -4 l5 -5" fill="#3A3A3A"/></svg>
<div class="a" style="left:2418px;top:175px;width:37px;height:44px;background:#F4EEB4;"></div>
<svg class="a" style="left:2420px;top:188px;" width="34" height="16" viewBox="0 0 34 16"><path d="M2 9 h12" stroke="#3A3A3A" stroke-width="2"/><rect x="14" y="3" width="18" height="11" fill="#3A3A3A"/></svg>
<div class="a" style="left:1942px;top:221px;width:606px;height:3px;background:#D8DCE8;"></div>
<div class="a" style="left:1942px;top:224px;width:606px;height:40px;background:#FBFBFE;"></div>
<div class="a t" style="left:1950px;top:233px;font-size:19.3px;color:#717171;font-family:'Liberation Sans',sans-serif;">Search Solution Explorer (Ctrl+,)</div>
<svg class="a" style="left:2495px;top:228px;" width="30" height="30" viewBox="0 0 30 30"><circle cx="18" cy="11" r="7" fill="none" stroke="#555" stroke-width="2.6"/><path d="M13 16 L5 24" stroke="#555" stroke-width="3.2"/></svg>
<div class="a" style="left:2528.5px;top:240.5px;width:0;height:0;border-left:4.5px solid transparent;border-right:4.5px solid transparent;border-top:5px solid #555"></div>
<div class="a" style="left:1942px;top:264px;width:606px;height:5px;background:#E4E6EE;"></div>
<svg class="a" style="left:2021px;top:275px;" width="14" height="20" viewBox="0 0 14 20"><path d="M3 2 L11 10 L3 18 Z" fill="none" stroke="#444" stroke-width="2"/></svg>
<div class="a" style="left:2049px;top:282px;width:8px;height:14px;background:#4CB6E0;"></div>
<svg class="a" style="left:2060px;top:272px;" width="36" height="30" viewBox="0 0 36 30"><rect x="2" y="2" width="28" height="24" fill="none" stroke="#68217A" stroke-width="2"/><rect x="2" y="2" width="3" height="24" fill="#40A040"/><text x="7" y="20" font-size="14" font-family="Liberation Sans" font-weight="bold" fill="#333">C#</text></svg>
<div class="a t" style="left:2094px;top:277px;font-size:20px;color:#1E1E1E;font-family:'Liberation Sans',sans-serif;">FancyZonesEditor</div>
<svg class="a" style="left:2022px;top:309px;" width="16" height="16" viewBox="0 0 16 16"><path d="M14 2 V14 H2 Z" fill="#444"/></svg>
<div class="a" style="left:2049px;top:315px;width:8px;height:14px;background:#4CB6E0;"></div>
<svg class="a" style="left:2060px;top:305px;" width="36" height="30" viewBox="0 0 36 30"><rect x="2" y="2" width="28" height="24" fill="none" stroke="#9050C8" stroke-width="2"/><path d="M7 8 h8 M11 4 v8 M14 14 h8 M18 10 v8" stroke="#333" stroke-width="3"/></svg>
<div class="a t" style="left:2094px;top:310px;font-size:20px;color:#1E1E1E;font-family:'Liberation Sans',sans-serif;">FancyZonesLib</div>
<svg class="a" style="left:2053px;top:341px;" width="14" height="20" viewBox="0 0 14 20"><path d="M3 2 L11 10 L3 18 Z" fill="none" stroke="#444" stroke-width="2"/></svg>
<svg class="a" style="left:2088px;top:340px;" width="30" height="22" viewBox="0 0 30 22"><rect x="2" y="6" width="7" height="9" fill="#333"/><path d="M9 10 h6" stroke="#333" stroke-width="2"/><rect x="15" y="3" width="12" height="14" fill="#333"/></svg>
<div class="a t" style="left:2126px;top:343px;font-size:20px;color:#1E1E1E;font-family:'Liberation Sans',sans-serif;">References</div>
<svg class="a" style="left:2053px;top:374px;" width="14" height="20" viewBox="0 0 14 20"><path d="M3 2 L11 10 L3 18 Z" fill="none" stroke="#444" stroke-width="2"/></svg>
<svg class="a" style="left:2088px;top:370px;" width="32" height="30" viewBox="0 0 32 30"><rect x="4" y="4" width="18" height="18" fill="#D8C080"/><rect x="12" y="12" width="14" height="14" fill="#A8D0F0" stroke="#3A78C0" stroke-width="1.5"/></svg>
<div class="a t" style="left:2126px;top:376px;font-size:20px;color:#1E1E1E;font-family:'Liberation Sans',sans-serif;">External Dependencies</div>
<svg class="a" style="left:2053px;top:407px;" width="14" height="20" viewBox="0 0 14 20"><path d="M3 2 L11 10 L3 18 Z" fill="none" stroke="#444" stroke-width="2"/></svg>
<svg class="a" style="left:2088px;top:403px;" width="32" height="30" viewBox="0 0 32 30"><rect x="6" y="5" width="20" height="18" fill="#D8C080"/><path d="M3 22 h6 M6 19 v6" stroke="#333" stroke-width="1.5"/></svg>
<div class="a t" style="left:2126px;top:409px;font-size:20px;color:#1E1E1E;font-family:'Liberation Sans',sans-serif;">Header Files</div>
<svg class="a" style="left:2088px;top:436px;" width="32" height="30" viewBox="0 0 32 30"><rect x="6" y="5" width="20" height="18" fill="#D8C080"/><path d="M3 22 h6 M6 19 v6" stroke="#333" stroke-width="1.5"/></svg>
<div class="a t" style="left:2126px;top:442px;font-size:20px;color:#1E1E1E;font-family:'Liberation Sans',sans-serif;">Resource Files</div>
<div class="a" style="left:2520px;top:269px;width:28px;height:500px;background:#F0F1F6;"></div>
<svg class="a" style="left:2526px;top:274px;" width="18" height="12" viewBox="0 0 18 12"><path d="M2 10 L9 3 L16 10 z" fill="#B8B8C0"/></svg>
<div class="a" style="left:2527px;top:353px;width:14px;height:137px;background:#D0D2DC;"></div>
<svg class="a" style="left:2526px;top:745px;" width="18" height="12" viewBox="0 0 18 12"><path d="M2 2 L9 9 L16 2 z" fill="#A0A0A8"/></svg>
<div class="a" style="left:1942px;top:768px;width:606px;height:47px;background:#5D6B99;"></div>
<div class="a" style="left:1942px;top:815px;width:606px;height:47px;background:#4B618F;"></div>
<svg class="a" style="left:2485px;top:828px;" width="20" height="24" viewBox="0 0 20 24"><path d="M6 2 h8 M8 2 v11 M12 2 v11 M4 13 h12 M10 13 v9" stroke="#D8DCEC" stroke-width="2"/></svg>
<svg class="a" style="left:2515px;top:832px;" width="20" height="20" viewBox="0 0 20 20"><path d="M3 3 L17 17 M17 3 L3 17" stroke="#D8DCEC" stroke-width="2.2"/></svg>
<div class="a" style="left:1942px;top:862px;width:606px;height:35px;background:#F8F9FC;"></div>
<div class="a" style="left:2522.0px;top:879.0px;width:0;height:0;border-left:5.0px solid transparent;border-right:5.0px solid transparent;border-top:6px solid #333"></div>
<div class="a" style="left:1942px;top:897px;width:606px;height:48px;background:#D8DDEC;"></div>
<div class="a" style="left:1942px;top:945px;width:606px;height:368px;background:#F6F7FB;"></div>
<div class="a" style="left:0px;top:1325px;width:2560px;height:43px;background:#43568C;"></div>
<svg class="a" style="left:6px;top:1334px;" width="32" height="28" viewBox="0 0 32 28"><path d="M8 3 h22 l-5 20 h-22 z" fill="none" stroke="#E8ECF8" stroke-width="2"/></svg>
<div class="a t" style="left:49px;top:1339px;font-size:20px;color:#F0F2FA;font-family:'Liberation Sans',sans-serif;">Ready</div>
<svg class="a" style="left:1983px;top:1335px;" width="24" height="28" viewBox="0 0 24 28"><path d="M12 26 V5 M4 12 L12 3 L20 12" fill="none" stroke="#E8ECF8" stroke-width="3"/></svg>
<div class="a t" style="left:2018px;top:1340px;font-size:20px;color:#F0F2FA;font-family:'Liberation Sans',sans-serif;">0</div>
<svg class="a" style="left:2070px;top:1334px;" width="28" height="28" viewBox="0 0 28 28"><path d="M4 24 L20 6 L24 10 L8 26 Z M2 27 l3 -3" fill="#E8ECF8"/></svg>
<div class="a t" style="left:2106px;top:1340px;font-size:20px;color:#F0F2FA;font-family:'Liberation Sans',sans-serif;">0</div>
<svg class="a" style="left:2154px;top:1332px;" width="32" height="32" viewBox="0 0 32 32"><path d="M16 2 L30 16 L16 30 L2 16 Z" fill="#E8ECF8"/><path d="M13 9 v13 M13 12 l5 5" stroke="#43568C" stroke-width="2.5"/></svg>
<div class="a t" style="left:2196px;top:1340px;font-size:20px;color:#F0F2FA;font-family:'Liberation Sans',sans-serif;">PowerToys</div>
<svg class="a" style="left:2328px;top:1332px;" width="30" height="32" viewBox="0 0 30 32"><path d="M5 4 L15 16 L25 4 M15 16 V30" fill="none" stroke="#E8ECF8" stroke-width="3.5"/></svg>
<div class="a t" style="left:2370px;top:1340px;font-size:20px;color:#F0F2FA;font-family:'Liberation Sans',sans-serif;">master</div>
<svg class="a" style="left:2443px;top:1340px;" width="16" height="10" viewBox="0 0 16 10"><path d="M2 8 L8 2 L14 8 Z" fill="#E8ECF8"/></svg>
<svg class="a" style="left:2500px;top:1332px;" width="32" height="32" viewBox="0 0 32 32"><path d="M6 22 q4 -2 4 -8 q0 -8 6 -9 q6 1 6 9 q0 6 4 8 z M12 25 h8 v4 h-8 z" fill="#E8ECF8"/></svg>
<div class="a" style="left:2548px;top:133px;width:12px;height:1192px;background:#5D6B99;"></div>
<div class="a" style="left:2558px;top:0px;width:2px;height:1368px;background:#8A96B8;"></div>
</div>
<div class="a" style="left:0px;top:0px;width:1652px;height:695px;background:rgba(0,81,245,.5);"></div>
<div class="a" style="left:1654px;top:0px;width:906px;height:1368px;background:rgba(191,198,211,.75);"></div>
<div class="a" style="left:0px;top:697px;width:1652px;height:671px;background:rgba(191,198,211,.75);"></div>
<div class="a" style="left:1651px;top:0px;width:1px;height:695px;background:rgba(0,30,150,.35);"></div>
<div class="a" style="left:0px;top:694px;width:1651px;height:1px;background:rgba(0,30,150,.35);"></div>
<div class="a" style="left:1652px;top:0px;width:2px;height:1368px;background:#fff;"></div>
<div class="a" style="left:0px;top:695px;width:1652px;height:2px;background:#fff;"></div>
<div class="a" style="left:0px;top:1368px;width:2560px;height:1.5px;background:#fff;"></div>
<div class="a" style="left:0px;top:1369px;width:2560px;height:1.5px;background:#2A3A55;"></div>
<div class="a" style="left:0px;top:0px;width:1px;height:695px;background:#DDE8FF;"></div>
<div class="a" style="left:0px;top:0px;width:2560px;height:1.5px;background:#F4F8FF;"></div>
<div class="a" style="left:1px;top:2px;width:1650px;height:1px;background:rgba(0,30,150,.25);"></div>
<svg class="a" style="left:800px;top:310px;" width="60" height="80" viewBox="0 0 60 80"><path d="M26 10 H33.3 V66.4 H26 Z M13.3 18 L31 10 L33 15 L13.3 24.7 Z" fill="#000"/></svg>
<svg class="a" style="left:800px;top:1000px;" width="50" height="70" viewBox="0 0 50 70"><path d="M11.5 10 C15 7.5 20 6.8 24 6.8 C32 6.8 36.6 11.5 36.6 18.5 C36.6 26 30.5 31 22 31 L15.5 31 M22 31 C33 31 39 37 39 45.5 C39 54.5 32 59.7 23 59.7 C18 59.7 13.5 58.8 10.5 57" fill="none" stroke="#000" stroke-width="5.6"/></svg>
<div class="a" style="left:0px;top:1370px;width:2560px;height:70px;background:linear-gradient(90deg,#c3deeb 0%,#c4dcec 50%,#c9d4ec 100%);"></div>
<svg class="a" style="left:28px;top:1390px;" width="30" height="30" viewBox="0 0 30 30"><path d="M2 5 L12 3.6 V14 H2 Z M14 3.3 L28 1.4 V14 H14 Z M2 16 H12 V26.4 L2 25 Z M14 16 H28 V28.6 L14 26.7 Z" fill="#000"/></svg>
<svg class="a" style="left:108px;top:1386px;" width="36" height="36" viewBox="0 0 36 36"><circle cx="22" cy="14" r="9.5" fill="none" stroke="#1a1a1a" stroke-width="2"/><path d="M15 21 L3 33" stroke="#1a1a1a" stroke-width="2.2"/></svg>
<svg class="a" style="left:194px;top:1389px;" width="38" height="33" viewBox="0 0 38 33"><path d="M4 2 V31 M22 2 V31 M4 8 H22 M4 25 H22 M32 3 V30" stroke="#1a1a1a" stroke-width="2"/><circle cx="32" cy="12" r="2" fill="#1a1a1a"/></svg>
<svg class="a" style="left:278px;top:1386px;" width="42" height="36" viewBox="0 0 42 36"><path d="M2 4 h14 l3 3 h-17z" fill="#E0A820"/><rect x="2" y="7" width="38" height="27" rx="2" fill="#FFD04A"/><path d="M10 34 V20 H32 V34 H26 V26 H16 V34 Z" fill="#2F88D0"/></svg>
<svg class="a" style="left:364px;top:1383px;" width="44" height="44" viewBox="0 0 44 44"><defs><linearGradient id="eg1" x1="0.1" y1="0.9" x2="0.95" y2="0.25"><stop offset="0" stop-color="#0E56A8"/><stop offset="0.45" stop-color="#1A86DA"/><stop offset="0.7" stop-color="#2CC4D8"/><stop offset="1" stop-color="#5EE06A"/></linearGradient></defs><circle cx="21.5" cy="21.5" r="20.5" fill="url(#eg1)"/><path d="M2 20 C4 11 12 6 20 7 C14 9 10 14 10 21 C10 30 16 38 26 41 C12 41 2 32 2 20 Z" fill="#1466C0" opacity=".55"/><path d="M14 22 C14 16 18 13 22 14 C26 15 27 19 25 23 C29 27 36 27 42 23 L42 27 C36 34 26 34 20 31 C16 29 14 26 14 22 Z" fill="#C3DEEB"/></svg>
<svg class="a" style="left:452px;top:1383px;" width="42" height="44" viewBox="0 0 42 44"><defs><radialGradient id="ff1" cx="0.75" cy="0.2" r="0.95"><stop offset="0" stop-color="#FFE63A"/><stop offset="0.35" stop-color="#FFA628"/><stop offset="0.7" stop-color="#FF4A3A"/><stop offset="1" stop-color="#E8146E"/></radialGradient><radialGradient id="ff2" cx="0.45" cy="0.6" r="0.6"><stop offset="0" stop-color="#5A4BFF"/><stop offset="1" stop-color="#A440E8"/></radialGradient></defs><path d="M28 2 C34 6 39 12 40 20 C41 32 32 41 21 41 C10 41 2 33 2 22 C2 16 4 11 7 8 C8 12 10 13 13 12 C16 8 22 8 26 10 C29 7 29 4 28 2 Z" fill="url(#ff1)"/><path d="M14 22 C14 16 18 12 24 12 C30 13 33 18 32 24 C31 30 26 33 21 32 C17 31 15 28 15 26 C18 28 22 28 24 25 C26 22 24 19 21 19 C18 19 16 21 14 22 Z" fill="url(#ff2)"/></svg>
<svg class="a" style="left:538px;top:1384px;" width="44" height="44" viewBox="0 0 44 44"><circle cx="22" cy="22" r="20" fill="#E33B2E"/><path d="M22 22 L4.7 12 A20 20 0 0 0 22 42 Z" fill="#2DA94F"/><path d="M22 22 L39.3 12 A20 20 0 0 1 22 42 Z" fill="#FCC934"/><path d="M22 22 L4.7 12 A20 20 0 0 1 39.3 12 Z" fill="#E33B2E"/><circle cx="22" cy="22" r="9" fill="#fff"/><circle cx="22" cy="22" r="7" fill="#4285F4"/></svg>
<div class="a" style="left:605px;top:1370px;width:85px;height:66px;background:#EAF1F8;"></div>
<div class="a" style="left:605px;top:1435px;width:85px;height:5px;background:#0A6CC8;"></div>
<svg class="a" style="left:627px;top:1388px;" width="40" height="33" viewBox="0 0 40 33"><defs><linearGradient id="cm" x1="0" y1="0" x2="1" y2="1"><stop offset="0" stop-color="#3a3a3a"/><stop offset="0.35" stop-color="#000"/></linearGradient></defs><rect x="1" y="1" width="38" height="31" rx="1" fill="url(#cm)"/></svg>
<svg class="a" style="left:714px;top:1388px;" width="40" height="33" viewBox="0 0 40 33"><rect x="1" y="1" width="38" height="31" rx="1" fill="url(#cm)"/></svg>
<svg class="a" style="left:800px;top:1388px;" width="42" height="32" viewBox="0 0 42 32"><path d="M9 2 H41 L33 30 H1 Z" fill="#4A7BD8"/><path d="M12 8 L22 16 L11 24" fill="none" stroke="#fff" stroke-width="3"/><path d="M19 25 H28" stroke="#fff" stroke-width="3"/></svg>
<svg class="a" style="left:884px;top:1383px;" width="46" height="44" viewBox="0 0 46 44"><g transform="scale(0.46,0.44)"><path d="M74 98 L74 70 L16 20 L4 27 L4 35 Z" fill="#1A8AD4"/><path d="M74 2 L74 30 L16 80 L4 73 L4 65 Z" fill="#1F9CF0"/><path d="M74 2 L96 13 V87 L74 98 Z" fill="#2AADF2"/></g></svg>
<svg class="a" style="left:971px;top:1383px;" width="46" height="44" viewBox="0 0 46 44"><g transform="scale(0.46,0.44)"><path d="M14 24 L72 74 L72 98 L14 44 Z" fill="#8C4FDC"/><path d="M14 76 L72 26 L72 2 L14 56 Z" fill="#9A5BE8"/><path d="M4 30 L14 22 L14 78 L4 70 Z" fill="#5E26B0"/><path d="M72 2 L96 12 V88 L72 98 Z" fill="#B68AF4"/></g></svg>
<div class="a" style="left:960px;top:1435px;width:70px;height:5px;background:#0A6CC8;"></div>
<svg class="a" style="left:1060px;top:1385px;" width="44" height="40" viewBox="0 0 44 40"><rect x="12" y="2" width="30" height="36" fill="#1D7BD6"/><rect x="26" y="2" width="16" height="18" fill="#32A6F0"/><path d="M12 20 L42 20 V38 H12Z" fill="#0F64B8"/><rect x="2" y="10" width="22" height="22" rx="2" fill="#0B5FB5"/><circle cx="13" cy="21" r="5.5" fill="none" stroke="#fff" stroke-width="2.5"/></svg>
<svg class="a" style="left:1147px;top:1385px;" width="44" height="42" viewBox="0 0 44 42"><rect x="3" y="3" width="38" height="30" fill="#fff" stroke="#000" stroke-width="2.5"/><rect x="3" y="3" width="38" height="6" fill="#000"/><path d="M8 15 H20 M8 21 H18 M8 27 H18" stroke="#000" stroke-width="2.5"/><circle cx="29" cy="23" r="9" fill="#fff" stroke="#000" stroke-width="3"/><path d="M22 30 L13 40" stroke="#000" stroke-width="4"/><path d="M25 19 v6 M28 19 v6 M31 19 v6" stroke="#000" stroke-width="1.5"/></svg>
<svg class="a" style="left:1238px;top:1383px;" width="42" height="43" viewBox="0 0 42 43"><path d="M3 15 L19 9 L33 15 V36 L19 42 L3 36 Z" fill="#1C9AD6"/><path d="M19 20 L33 15 V36 L19 42 Z" fill="#0E78B8"/><rect x="9" y="20" width="6" height="6" fill="#7AD4F8"/><rect x="22" y="26" width="6" height="6" fill="#7AD4F8"/><circle cx="22" cy="5" r="4" fill="#28A8E8"/><circle cx="34" cy="14" r="4" fill="#28A8E8"/></svg>
<svg class="a" style="left:1322px;top:1383px;" width="42" height="43" viewBox="0 0 42 43"><rect x="2" y="2" width="32" height="40" fill="#F4F4F4" stroke="#C8C8C8" stroke-width="1"/><rect x="4" y="4" width="28" height="24" fill="#4C6CC8"/><path d="M4 18 Q18 10 32 20 V28 H4 Z" fill="#F0F4FF"/><rect x="4" y="30" width="28" height="5" fill="#10143A"/><path d="M10 38 L38 10" stroke="#B0203A" stroke-width="3.5"/></svg>
<div class="a" style="left:1308px;top:1435px;width:56px;height:5px;background:#0A6CC8;"></div>
<div class="a" style="left:1364px;top:1435px;width:14px;height:5px;background:#6AA8E0;"></div>
<svg class="a" style="left:2172px;top:1394px;" width="26" height="16" viewBox="0 0 26 16"><path d="M2 13 L13 3 L24 13" fill="none" stroke="#1a1a1a" stroke-width="2"/></svg>
<svg class="a" style="left:2212px;top:1396px;" width="30" height="18" viewBox="0 0 30 18"><rect x="2" y="2" width="23" height="14" fill="none" stroke="#000" stroke-width="2.2"/><rect x="5" y="5" width="6" height="8" fill="#000"/><rect x="25" y="6" width="3" height="6" fill="#000"/></svg>
<svg class="a" style="left:2252px;top:1391px;" width="32" height="26" viewBox="0 0 32 26"><path d="M3 9 H8 L15 3 V23 L8 17 H3 Z" fill="none" stroke="#1a1a1a" stroke-width="1.8"/><path d="M19 9 Q22 13 19 17 M23 6 Q28 13 23 20 M27 3 Q34 13 27 23" fill="none" stroke="#6a6a6a" stroke-width="1.6"/></svg>
<div class="a t" style="left:2300px;top:1397px;font-size:19.3px;color:#000;font-family:'Liberation Sans',sans-serif;">ENG</div>
<div class="a t" style="left:2373px;top:1380px;font-size:20px;color:#000;font-family:'Liberation Sans',sans-serif;">4:15 PM</div>
<div class="a t" style="left:2363px;top:1412px;font-size:20.7px;color:#000;font-family:'Liberation Sans',sans-serif;">4/27/2020</div>
<svg class="a" style="left:2485px;top:1390px;" width="44" height="46" viewBox="0 0 44 46"><path d="M3 2 H31 V20 H12 L6 27 V20 H3 Z" fill="#000"/><path d="M8 7 H26 M8 11 H26 M8 15 H22" stroke="#fff" stroke-width="1.8"/><circle cx="30" cy="30" r="12" fill="#CBD6E6" stroke="#777" stroke-width="1.2"/><text x="25" y="37" font-size="17" font-family="Liberation Sans" fill="#000">1</text></svg>
<div class="a" style="left:2552px;top:1376px;width:1px;height:60px;background:#A8B8D0;"></div>
<div id="cmd" class="a" style="left:878px;top:477px;width:1591px;height:724px;background:#0C0C0C;box-shadow:0 2px 10px rgba(0,0,0,.18);outline:1px solid rgba(10,30,70,.55)">
<div class="a" style="left:0px;top:0px;width:1591px;height:51px;background:#0078D7;"></div>
<svg class="a" style="left:13px;top:15px;" width="30" height="24" viewBox="0 0 30 24"><rect x="1" y="3" width="26" height="19" fill="#000" stroke="#9BC8F0" stroke-width="1"/><rect x="1" y="1" width="26" height="3" fill="#E8E8E8"/><text x="3" y="18" font-size="11" font-weight="bold" font-family="Liberation Mono" fill="#fff">C:\.</text></svg>
<div class="a t" style="left:47px;top:16px;font-size:20.9px;color:#FFFFFF;font-family:'Liberation Sans',sans-serif;">Command Prompt</div>
<div class="a" style="left:1381px;top:26px;width:17px;height:1.5px;background:#fff;"></div>
<div class="a" style="left:1462px;top:18px;width:16px;height:16px;background:none;border:1.5px solid #fff;box-sizing:border-box"></div>
<svg class="a" style="left:1542px;top:17px;" width="20" height="20" viewBox="0 0 20 20"><path d="M2 2 L18 18 M18 2 L2 18" stroke="#fff" stroke-width="1.5"/></svg>
<div class="a t" style="left:2px;top:56.93907999999999px;font-size:21.62px;color:#CCCCCC;font-family:'Liberation Mono',monospace;">Microsoft Windows [Version 10.0.18363.752]</div>
<div class="a t" style="left:2px;top:84.93907999999999px;font-size:21.62px;color:#CCCCCC;font-family:'Liberation Mono',monospace;">(c) 2019 Microsoft Corporation. All rights reserved.</div>
<div class="a t" style="left:2px;top:140.93908px;font-size:21.62px;color:#CCCCCC;font-family:'Liberation Mono',monospace;">C:\Users\enrico&gt;</div>
<div class="a" style="left:211px;top:157px;width:12px;height:5px;background:#E8E8E8;"></div>
<div class="a" style="left:1561px;top:51px;width:30px;height:673px;background:#F0F0F0;"></div>
<svg class="a" style="left:1569px;top:62px;" width="18" height="12" viewBox="0 0 18 12"><path d="M2 10 L9 3 L16 10" fill="none" stroke="#606060" stroke-width="2.2"/></svg>
<div class="a" style="left:1564px;top:83px;width:26px;height:28px;background:#CDCDCD;"></div>
<svg class="a" style="left:1569px;top:700px;" width="18" height="12" viewBox="0 0 18 12"><path d="M2 2 L9 9 L16 2" fill="none" stroke="#606060" stroke-width="2.2"/></svg>
</div>
</body></html>
